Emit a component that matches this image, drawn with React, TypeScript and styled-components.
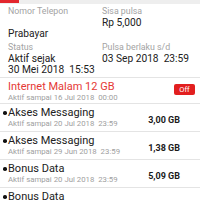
import React from 'react';
import styled, { createGlobalStyle } from 'styled-components';

const GlobalStyle = createGlobalStyle`
  html, body {
    margin: 0;
    padding: 0;
    background: #ffffff;
  }
  body {
    font-family: Roboto, "Noto Sans", "Liberation Sans", sans-serif;
    color: #212121;
    overflow: hidden;
  }
`;

interface Package {
  name: string;
  until: string;
  value: string;
}

const packages: Package[] = [
  { name: 'Akses Messaging', until: 'Aktif sampai 20 Jul 2018  23:59', value: '3,00 GB' },
  { name: 'Akses Messaging', until: 'Aktif sampai 29 Jun 2018  23:59', value: '1,38 GB' },
  { name: 'Bonus Data', until: 'Aktif sampai 20 Jul 2018  23:59', value: '5,09 GB' },
  { name: 'Bonus Data', until: 'Aktif sampai 20 Jul 2018  23:59', value: '1,00 GB' },
];

const Page = styled.div`
  width: 200px;
  height: 200px;
  overflow: hidden;
  background: #ffffff;
`;

const TabBar = styled.div`
  height: 4px;
  background: #eeeeee;
`;

const ActiveTab = styled.div`
  width: 19px;
  height: 3px;
  background: #e3262d;
`;

const InfoGrid = styled.div`
  display: grid;
  grid-template-columns: 94px 1fr;
  row-gap: 3px;
  padding: 2px 0 2px 8px;
  border-bottom: 1px solid #e4e4e4;
`;

const InfoCell = styled.div`
  display: flex;
  flex-direction: column;
`;

const Label = styled.div`
  font-size: 8.8px;
  line-height: 11px;
  color: #a3a3a3;
  white-space: nowrap;
`;

const Value = styled.div<{ $hidden?: boolean }>`
  font-size: 10.2px;
  line-height: 11px;
  height: 11px;
  color: ${(p) => (p.$hidden ? 'transparent' : '#212121')};
  white-space: pre;
`;

const Row = styled.div<{ $head?: boolean }>`
  display: flex;
  align-items: center;
  justify-content: space-between;
  height: ${(p) => (p.$head ? '25px' : '27px')};
  padding: ${(p) => (p.$head ? '0 5px 0 8px' : '0 20px 0 8px')};
  border-bottom: 1px solid #e4e4e4;
`;

const RowText = styled.div`
  display: flex;
  flex-direction: column;
`;

const Title = styled.div<{ $red?: boolean; $bullet?: boolean }>`
  position: relative;
  font-size: 11px;
  line-height: 11px;
  color: ${(p) => (p.$red ? '#e53935' : '#212121')};
  white-space: nowrap;
  margin-top: ${(p) => (p.$red ? '1px' : '0')};

  ${(p) =>
    p.$bullet &&
    `
    &::before {
      content: '';
      position: absolute;
      left: -5px;
      top: 4px;
      width: 3.5px;
      height: 3.5px;
      border-radius: 50%;
      background: #111111;
    }
  `}
`;

const Until = styled.div`
  font-size: 7.8px;
  line-height: 9px;
  color: #a0a0a0;
  margin-top: 1px;
  white-space: pre;
`;

const Amount = styled.div`
  font-size: 9px;
  font-weight: 700;
  color: #1a1a1a;
  white-space: nowrap;
  margin-top: 4px;
`;

const OffButton = styled.button`
  width: 21px;
  height: 11px;
  padding: 0;
  border: none;
  border-radius: 2px;
  background: #e21f1f;
  color: #ffffff;
  font-family: Roboto, "Liberation Sans", sans-serif;
  font-size: 7.5px;
  line-height: 11px;
  margin-top: -2px;
`;

const App = () => {
  return (
    <Page>
      <GlobalStyle />
      <TabBar>
        <ActiveTab />
      </TabBar>

      <InfoGrid>
        <InfoCell>
          <Label>Nomor Telepon</Label>
          <Value $hidden>0812</Value>
          <Value>Prabayar</Value>
        </InfoCell>
        <InfoCell>
          <Label>Sisa pulsa</Label>
          <Value>Rp 5,000</Value>
        </InfoCell>
        <InfoCell>
          <Label>Status</Label>
          <Value>Aktif sejak</Value>
          <Value>30 Mei 2018  15:53</Value>
        </InfoCell>
        <InfoCell>
          <Label>Pulsa berlaku s/d</Label>
          <Value>03 Sep 2018  23:59</Value>
        </InfoCell>
      </InfoGrid>

      <Row $head>
        <RowText>
          <Title $red>Internet Malam 12 GB</Title>
          <Until>Aktif sampai 16 Jul 2018  00:00</Until>
        </RowText>
        <OffButton>Off</OffButton>
      </Row>

      {packages.map((pkg, i) => (
        <Row key={i}>
          <RowText>
            <Title $bullet>{pkg.name}</Title>
            <Until>{pkg.until}</Until>
          </RowText>
          <Amount>{pkg.value}</Amount>
        </Row>
      ))}
    </Page>
  );
};

export default App;
